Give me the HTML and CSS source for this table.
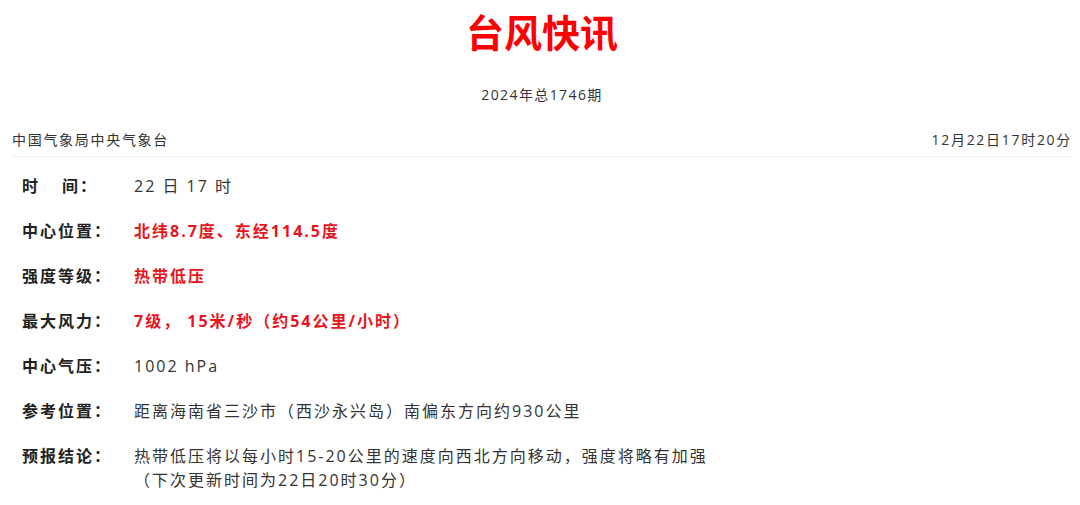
FILE: index.html
```html
<!DOCTYPE html>
<html lang="zh-CN">
<head>
    <meta charset="UTF-8">
    <meta name="viewport" content="width=device-width, initial-scale=1.0">
    <title>台风快讯</title>
    <link rel="stylesheet" href="styles.css">
</head>
<body>
    <div class="page">
        <h1 class="title">台风快讯</h1>
        <p class="issue">2024年总1746期</p>

        <div class="meta">
            <span>中国气象局中央气象台</span>
            <span>12月22日17时20分</span>
        </div>

        <table class="info">
            <tr>
                <th><span class="spread">时</span>间：</th>
                <td>22 日 17 时</td>
            </tr>
            <tr>
                <th>中心位置：</th>
                <td class="hot">北纬8.7度、东经114.5度</td>
            </tr>
            <tr>
                <th>强度等级：</th>
                <td class="hot">热带低压</td>
            </tr>
            <tr>
                <th>最大风力：</th>
                <td class="hot">7级， 15米/秒（约54公里/小时）</td>
            </tr>
            <tr>
                <th>中心气压：</th>
                <td>1002 hPa</td>
            </tr>
            <tr>
                <th>参考位置：</th>
                <td>距离海南省三沙市（西沙永兴岛）南偏东方向约930公里</td>
            </tr>
            <tr>
                <th>预报结论：</th>
                <td>热带低压将以每小时15-20公里的速度向西北方向移动，强度将略有加强<br>（下次更新时间为22日20时30分）</td>
            </tr>
        </table>
    </div>
</body>
</html>
```

FILE: styles.css
```css
body {
    margin: 0;
    padding: 0;
    background: #fff;
    color: #333;
    font-family: "Open Sans", "Noto Sans CJK SC", sans-serif;
}
.page {
    padding: 0 8px 0 12px;
}
.title {
    margin: 0;
    padding-top: 6px;
    height: 50px;
    line-height: 50px;
    text-align: center;
    color: #ff0000;
    font-size: 38px;
    font-weight: bold;
    font-family: "Noto Sans CJK SC", sans-serif;
}
.issue {
    margin: 29px 0 0;
    text-align: center;
    font-size: 14px;
    line-height: 20px;
    letter-spacing: 1.4px;
}
.meta {
    display: flex;
    justify-content: space-between;
    margin-top: 25px;
    padding-bottom: 6px;
    border-bottom: 1px solid #eee;
    font-size: 14px;
    line-height: 20px;
    letter-spacing: 1.7px;
}
.info {
    border-collapse: collapse;
    margin-top: 17px;
    font-size: 16px;
    line-height: 24px;
    letter-spacing: 2px;
}
.info th {
    width: 112px;
    padding: 0 0 21px 10px;
    text-align: left;
    vertical-align: top;
    font-weight: bold;
    color: #222;
    white-space: nowrap;
}
.info td {
    padding: 0 0 21px 0;
    vertical-align: top;
}
.spread {
    margin-right: 22px;
}
.hot {
    color: #e8141b;
    font-weight: bold;
}
```
